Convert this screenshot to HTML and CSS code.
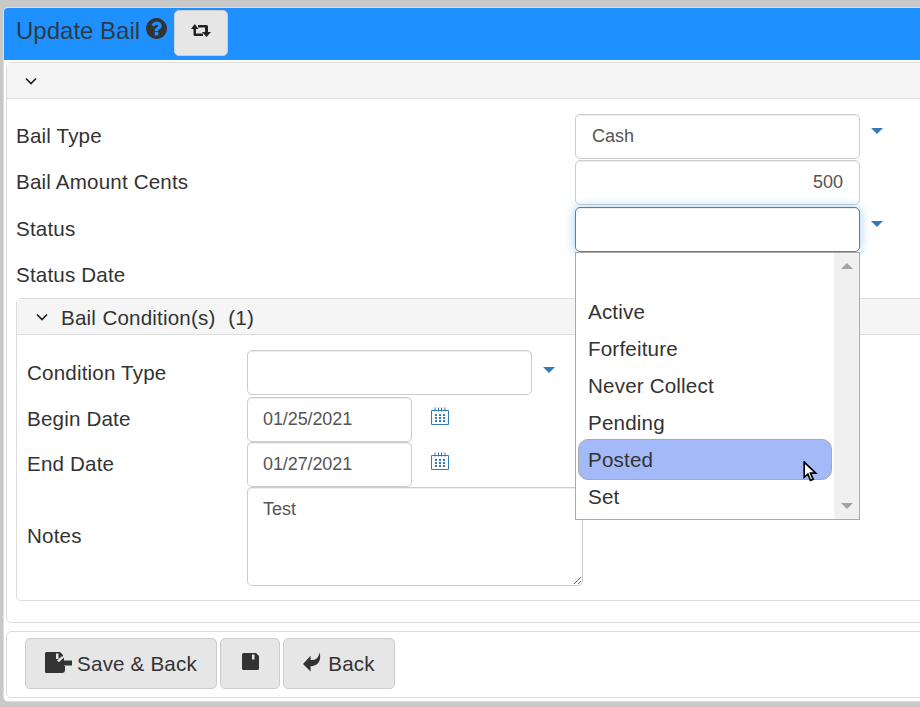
FILE: index.html
```html
<!DOCTYPE html>
<html lang="en">
<head>
<meta charset="utf-8">
<title>Update Bail</title>
<link rel="stylesheet" href="styles.css">
</head>
<body>
<div class="window">
  <header class="topbar">
    <h1 class="title">Update Bail</h1>
    <svg class="help" viewBox="128 128 1536 1536" aria-hidden="true"><path d="M1024 1376v-192q0-14-9-23t-23-9h-192q-14 0-23 9t-9 23v192q0 14 9 23t23 9h192q14 0 23-9t9-23zm256-672q0-88-55.500-163t-138.500-116-170-41q-243 0-371 213-15 24 8 42l132 100q7 6 19 6 16 0 25-12 53-68 86-92 34-24 86-24 48 0 85.500 26t37.500 59q0 38-20 61t-68 45q-63 28-115.500 86.500t-52.500 125.500v36q0 14 9 23t23 9h192q14 0 23-9t9-23q0-19 21.500-49.500t54.500-49.500q32-18 49-28.500t46-35 44.500-48 28-60.500 12.500-81zm384 192q0 209-103 385.500t-279.500 279.500-385.500 103-385.500-103-279.500-279.500-103-385.500 103-385.500 279.500-279.500 385.500-103 385.500 103 279.500 279.500 103 385.500z"/></svg>
    <button class="btn btn-top" type="button" aria-label="Toggle">
      <svg class="icon-retweet" viewBox="0 0 20 13" aria-hidden="true"><path d="M3.750 0L7.500 5H5v4.500h7V12H4a1.500 1.500 0 0 1-1.500-1.500V5H0zM15.500 13L11 8h3V3.500H7V1h8.500A1.500 1.500 0 0 1 17 2.500V8h3z"/></svg>
    </button>
  </header>
  <div class="content">
    <section class="panel panel-main">
      <div class="panel-head">
        <svg class="chev" viewBox="0 0 12 8" aria-hidden="true"><path d="M1 1.500l5 5 5-5"/></svg>
      </div>
      <div class="panel-body">
        <div class="row">
          <label class="label">Bail Type</label>
          <input class="field" type="text" value="Cash" readonly>
          <svg class="caret" viewBox="0 0 12 6" aria-hidden="true"><path d="M0 0h12L6 6z"/></svg>
        </div>
        <div class="row">
          <label class="label">Bail Amount Cents</label>
          <input class="field field-num" type="text" value="500" readonly>
        </div>
        <div class="row row-status">
          <label class="label">Status</label>
          <div class="combo">
            <input class="field field-focus" type="text" readonly>
            <div class="listbox">
              <ul class="options">
                <li class="option">&nbsp;</li>
                <li class="option">Active</li>
                <li class="option">Forfeiture</li>
                <li class="option">Never Collect</li>
                <li class="option">Pending</li>
                <li class="option option-hover">Posted</li>
                <li class="option">Set</li>
              </ul>
              <div class="scrollbar">
                <svg class="scroll-arrow" viewBox="0 0 12 6" aria-hidden="true"><path d="M6 0l6 6H0z"/></svg>
                <svg class="scroll-arrow" viewBox="0 0 12 6" aria-hidden="true"><path d="M0 0h12L6 6z"/></svg>
              </div>
            </div>
            <svg class="pointer" viewBox="0 0 14 20" aria-hidden="true"><path d="M1 1v14.500l3.500-3 2.500 6 2.500-1-2.500-6H12z"/></svg>
          </div>
          <svg class="caret" viewBox="0 0 12 6" aria-hidden="true"><path d="M0 0h12L6 6z"/></svg>
        </div>
        <div class="row row-date">
          <label class="label">Status Date</label>
          <input class="field" type="text" readonly>
        </div>
        <section class="subpanel">
          <div class="subpanel-head">
            <svg class="chev chev-sub" viewBox="0 0 12 8" aria-hidden="true"><path d="M1 1.500l5 5 5-5"/></svg>
            <span class="subpanel-title">Bail Condition(s)&nbsp; (1)</span>
          </div>
          <div class="subpanel-body">
            <div class="row row-sub row-cond">
              <label class="label label-sub label-cond">Condition Type</label>
              <input class="field" type="text" readonly>
              <svg class="caret" viewBox="0 0 12 6" aria-hidden="true"><path d="M0 0h12L6 6z"/></svg>
            </div>
            <div class="row row-sub">
              <label class="label label-sub">Begin Date</label>
              <input class="field field-date" type="text" value="01/25/2021" readonly>
              <svg class="cal" viewBox="0 0 18 18" aria-hidden="true">
                <path class="cal-line" d="M.5 3.500h17v14H.5zM4 .5v4M7.500.5v4M10.500.5v4M14 .5v4"/>
                <path class="cal-dots" d="M4 7h2v2H4zM8 7h2v2H8zM12 7h2v2h-2zM4 10h2v2H4zM8 10h2v2H8zM12 10h2v2h-2zM4 13h2v2H4zM8 13h2v2H8zM12 13h2v2h-2z"/>
              </svg>
            </div>
            <div class="row row-sub">
              <label class="label label-sub">End Date</label>
              <input class="field field-date" type="text" value="01/27/2021" readonly>
              <svg class="cal" viewBox="0 0 18 18" aria-hidden="true">
                <path class="cal-line" d="M.5 3.500h17v14H.5zM4 .5v4M7.500.5v4M10.500.5v4M14 .5v4"/>
                <path class="cal-dots" d="M4 7h2v2H4zM8 7h2v2H8zM12 7h2v2h-2zM4 10h2v2H4zM8 10h2v2H8zM12 10h2v2h-2zM4 13h2v2H4zM8 13h2v2H8zM12 13h2v2h-2z"/>
              </svg>
            </div>
            <div class="row row-sub row-notes">
              <label class="label label-sub">Notes</label>
              <textarea class="notes" readonly>Test</textarea>
            </div>
          </div>
        </section>
      </div>
    </section>
    <footer class="panel panel-foot">
      <button class="btn btn-save-back" type="button">
        <svg class="icon-saveback" viewBox="0 0 27 21" aria-hidden="true"><path fill-rule="evenodd" d="M1.500 0H15l3 3v1.500h-1.500L12 8.500l6 5.500h2v4a3 3 0 0 1-3 3H1.500A1.500 1.500 0 0 1 0 19.500v-18A1.500 1.500 0 0 1 1.500 0zM11 1.500v5.500h2.500V1.500z"/><path d="M19 5.500l0 3h8v5h-8v3l-6-5.500z"/></svg>
        <span>Save &amp; Back</span>
      </button>
      <button class="btn btn-save" type="button" aria-label="Save">
        <svg class="icon-save" viewBox="0 0 17 17" aria-hidden="true"><path fill-rule="evenodd" d="M1.500 0H14l3 3v12.500a1.500 1.500 0 0 1-1.500 1.500h-14A1.500 1.500 0 0 1 0 15.500v-14A1.500 1.500 0 0 1 1.500 0zM10 1.500v5h2.500v-5z"/></svg>
      </button>
      <button class="btn btn-back" type="button">
        <svg class="icon-back" viewBox="0 0 19 20" aria-hidden="true"><path d="M8 3.500v4.500c5 0 8-1 9.500-8 2 7-.5 14-9.500 14.500V20L0 12z"/></svg>
        <span>Back</span>
      </button>
    </footer>
  </div>
</div>
</body>
</html>
```
FILE: styles.css
```css
* { box-sizing: border-box; }

html, body { margin: 0; height: 707px; overflow: hidden; }

body {
  background: #c8c8c8;
  padding: 7px 0 0 3px;
  font-family: "Liberation Sans", Arial, sans-serif;
  font-size: 20.6px;
  letter-spacing: .17px;
  color: #333;
}

.window {
  width: 1000px;
  height: 695px;
  background: #fff;
  border: 1px solid #ddd;
  border-radius: 5px 0 0 5px;
  overflow: hidden;
}

.topbar {
  height: 52px;
  background: #1e90ff;
  display: flex;
  align-items: flex-start;
  padding-left: 12px;
}

.title {
  margin: 9px 0 0;
  font-size: 24px;
  font-weight: 400;
  line-height: 27px;
  letter-spacing: 0;
  color: #2e3b47;
}

.help {
  width: 21px;
  height: 21px;
  margin: 10px 0 0 6px;
  fill: #333;
}

.btn {
  background: #e6e6e6;
  border: 1px solid #ccc;
  border-radius: 5px;
  font: inherit;
  letter-spacing: inherit;
  color: #333;
  padding: 0;
  display: flex;
  align-items: center;
  justify-content: center;
}

.btn-top {
  width: 54px;
  height: 46px;
  margin: 2px 0 0 7px;
}

.icon-retweet { width: 20px; height: 13px; fill: #222; margin: 0 0 5px -1px; }

.content { padding: 2px 0 0 2px; }

.panel {
  border: 1px solid #ddd;
  border-radius: 5px 0 0 5px;
  background: #fff;
}

.panel-main { height: 561px; }

.panel-head {
  height: 36px;
  background: #f5f5f5;
  border-bottom: 1px solid #ddd;
  display: flex;
  align-items: center;
  padding: 0 0 0 18px;
}

.chev {
  width: 12px;
  height: 8px;
  fill: none;
  stroke: #222;
  stroke-width: 1.7;
}

.panel-body { padding: 15px 0 0 9px; }

.row {
  display: flex;
  align-items: center;
  height: 45px;
  margin-bottom: 1px;
  position: relative;
}

.row-status { margin-top: 2px; }
.row-date { margin-bottom: 0; }

.label {
  width: 559px;
  flex: none;
  font-size: 20.6px;
  line-height: 24px;
  margin-top: -2px;
}

.label-sub { width: 220px; }
.label-cond { margin-top: 0; }

.field {
  display: block;
  width: 285px;
  height: 45px;
  border: 1px solid #ccc;
  border-radius: 5px;
  background: #fff;
  padding: 0 16px;
  font: 18px "Liberation Sans", Arial, sans-serif;
  letter-spacing: 0;
  color: #555;
  outline: none;
  box-shadow: inset 0 1px 1px rgba(0, 0, 0, .075);
}

.field-num { text-align: right; }

.field-focus {
  border-color: #4a82b8;
  box-shadow: inset 0 1px 1px rgba(0, 0, 0, .075), 0 0 11px rgba(102, 175, 233, .6);
}

.field-date { width: 165px; padding-left: 15px; letter-spacing: -.1px; }

.caret {
  width: 12px;
  height: 6px;
  fill: #337ab7;
  margin: -12px 0 0 11px;
  align-self: center;
}

.combo { position: relative; width: 285px; height: 45px; }

.listbox {
  position: absolute;
  z-index: 5;
  left: 0;
  top: 45px;
  width: 285px;
  height: 268px;
  background: #fff;
  border: 1px solid #aaa;
  display: flex;
}

.options {
  flex: 1;
  list-style: none;
  margin: 0;
  padding: 3px 2px 0;
}

.option {
  height: 37px;
  line-height: 37px;
  padding-left: 10px;
  font-size: 20.6px;
  color: #333;
}

.option-hover {
  height: 41px;
  line-height: 39px;
  margin: -2px 0;
  padding-left: 9px;
  background: #a4b9f7;
  border: 1px solid #aaa;
  border-radius: 10px;
  position: relative;
}

.scrollbar {
  width: 25px;
  flex: none;
  background: #f0f0f0;
  display: flex;
  flex-direction: column;
  justify-content: space-between;
  align-items: center;
  padding: 10px 0 10px;
}

.scroll-arrow { width: 12px; height: 6px; fill: #a3a3a3; }

.pointer {
  position: absolute;
  z-index: 6;
  left: 228px;
  top: 254px;
  width: 15px;
  height: 21px;
  fill: #fff;
  stroke: #000;
  stroke-width: 1.6;
}

.subpanel {
  width: 1000px;
  height: 303px;
  border: 1px solid #ddd;
  border-radius: 5px 0 0 5px;
}

.subpanel-head {
  height: 36px;
  background: #f5f5f5;
  border-bottom: 1px solid #ddd;
  display: flex;
  align-items: center;
  padding-left: 19px;
}

.subpanel-title { margin-top: 2px; word-spacing: .5px; }

.chev-sub { width: 12px; height: 8px; margin-right: 13px; }

.subpanel-body { padding: 15px 0 0 10px; }

.row-sub { margin: 0; }
.row-cond { margin-bottom: 2px; }

.row-sub .caret { margin-top: -6px; }

.cal {
  width: 18px;
  height: 18px;
  margin: -7px 0 0 19px;
  fill: none;
}

.cal-line { fill: none; stroke: #337ab7; stroke-width: 1; }
.cal-dots { fill: #337ab7; }

.row-notes { height: 99px; }

.notes {
  display: block;
  width: 336px;
  height: 99px;
  border: 1px solid #ccc;
  border-radius: 5px;
  padding: 9px 15px;
  font: 18px/24px "Liberation Sans", Arial, sans-serif;
  letter-spacing: 0;
  color: #555;
  outline: none;
  box-shadow: inset 0 1px 1px rgba(0, 0, 0, .075);
}

.panel-foot {
  height: 67px;
  margin-top: 8px;
  padding: 6px 0 0 18px;
  display: flex;
  align-items: flex-start;
  gap: 3px;
}

.btn-save-back { width: 192px; height: 51px; gap: 5px; padding-top: 1px; }
.btn-save { width: 60px; height: 51px; }
.btn-back { width: 112px; height: 51px; gap: 7px; padding-top: 1px; }

.icon-saveback { width: 27px; height: 21px; fill: #333; margin-top: -4px; }
.icon-save { width: 17px; height: 17px; fill: #333; margin-top: -4px; }
.icon-back { width: 18px; height: 20px; fill: #333; margin-top: -4px; }
```
